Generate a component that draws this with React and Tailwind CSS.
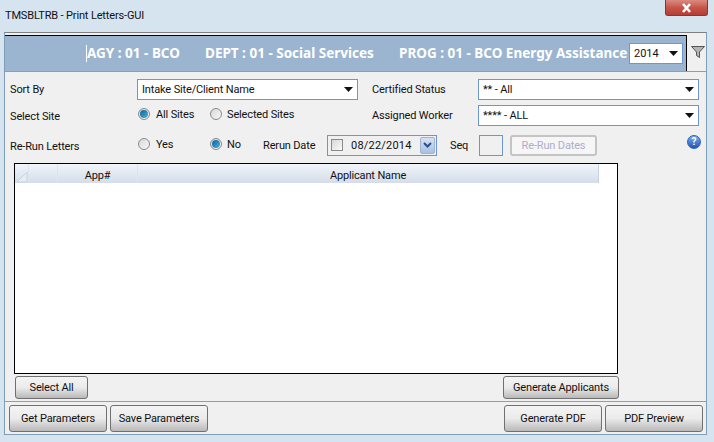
import React from "react";

const font = "font-['Roboto',sans-serif] text-[11px] tracking-[-0.15px] leading-none text-[#111]";

const Select = ({ value, width = "w-[221px]" }) => (
  <div className={`${width} h-[21px] shrink-0 bg-white border border-[#6d96cf] flex items-center justify-between pl-[4px] pr-[4px]`}>
    <span>{value}</span>
    <svg width="9" height="5" viewBox="0 0 9 5">
      <path d="M0 0h9L4.5 5z" fill="#111" />
    </svg>
  </div>
);

const Radio = ({ checked, label, labelClass }) => (
  <div className="flex items-center">
    <span className="w-[12px] h-[12px] rounded-full border border-[#8a8a8a] bg-gradient-to-br from-[#d8d8d8] to-[#f8f8f8] flex items-center justify-center shrink-0">
      {checked && <span className="w-[8px] h-[8px] rounded-full bg-gradient-to-br from-[#0f5f96] to-[#45b4e6]" />}
    </span>
    <span className={labelClass}>{label}</span>
  </div>
);

const Button = ({ children, className = "" }) => (
  <button className={`shrink-0 rounded-[3px] border border-[#707070] bg-gradient-to-b from-[#f4f4f4] via-[#ebebeb] to-[#b9b9b9] flex items-center justify-center ${className}`}>
    {children}
  </button>
);

export default function App() {
  return (
    <div className={`w-[714px] h-[442px] overflow-hidden bg-[#d6e4f0] flex flex-col ${font}`}>
      {/* Title bar */}
      <div className="h-[32px] shrink-0 flex items-start justify-between">
        <div className="pl-[5px] pt-[10px]">TMSBLTRB - Print Letters-GUI</div>
        <div className="w-[43px] h-[16px] mr-[6px] rounded-b-[3px] border border-t-0 border-[#7d3b36] bg-gradient-to-b from-[#d98b80] via-[#c8554a] to-[#b43c33] flex items-center justify-center">
          <svg width="13" height="10" viewBox="0 0 13 10">
            <path d="M3 1l7 8M10 1l-7 8" stroke="#fff" strokeWidth="2.6" />
          </svg>
        </div>
      </div>

      {/* Panel */}
      <div className="ml-[4px] w-[703px] h-[403px] shrink-0 bg-[#f0f0f0] border border-[#7f9db9] border-t-[#808080] flex flex-col">
        {/* Header */}
        <div className="flex items-start h-[38px] shrink-0 pt-[2px]">
          <div className="w-[682px] h-[37px] shrink-0 bg-[#9bb5d1] border-y border-r border-black flex items-center pl-[81px] font-['Noto_Sans',sans-serif] tracking-normal text-white font-bold text-[13.5px]">
            <span className="border-l border-white h-[17px] flex items-center w-[119px] shrink-0">AGY : 01 - BCO</span>
            <span className="w-[194px] shrink-0">DEPT : 01 - Social Services</span>
            <span className="w-[230px] shrink-0">PROG : 01 - BCO Energy Assistance</span>
            <div className="w-[54px] h-[21px] shrink-0 bg-white border border-[#6d96cf] flex items-center justify-between pl-[4px] pr-[4px] font-['Roboto',sans-serif] text-[#111] font-normal text-[11px]">
              <span>2014</span>
              <svg width="9" height="5" viewBox="0 0 9 5">
                <path d="M0 0h9L4.5 5z" fill="#111" />
              </svg>
            </div>
          </div>
          <svg className="ml-[4px] mt-[11px] shrink-0" width="14" height="12" viewBox="0 0 14 12">
            <path d="M.5.5h13L8.5 6v5.5l-3-2V6z" fill="#b4b4b4" stroke="#555" strokeWidth="1" />
          </svg>
        </div>

        {/* Form and grid */}
        <div className="flex-1 min-h-0 border-t border-[#7f9fd0] flex flex-col">
          <div className="flex items-center h-[21px] mt-[7px] pl-[5px]">
            <span className="w-[127px] shrink-0">Sort By</span>
            <Select value="Intake Site/Client Name" />
            <span className="w-[120px] pl-[14px] shrink-0">Certified Status</span>
            <Select value="** - All" />
          </div>

          <div className="flex items-center h-[21px] mt-[5px] pl-[5px]">
            <span className="w-[128px] pt-[1px] shrink-0">Select Site</span>
            <div className="w-[72px] -mt-[4px] shrink-0">
              <Radio checked label="All Sites" labelClass="ml-[6px] pt-[2px]" />
            </div>
            <div className="w-[162px] -mt-[4px] shrink-0">
              <Radio label="Selected Sites" labelClass="ml-[5px] pt-[2px]" />
            </div>
            <span className="w-[106px] shrink-0">Assigned Worker</span>
            <Select value="**** - ALL" />
          </div>

          <div className="flex items-center h-[22px] mt-[8px] pl-[5px]">
            <span className="w-[128px] pt-[3px] shrink-0">Re-Run Letters</span>
            <div className="w-[72px] -mt-[2px] shrink-0">
              <Radio label="Yes" labelClass="ml-[6px]" />
            </div>
            <div className="w-[53px] -mt-[2px] shrink-0">
              <Radio checked label="No" labelClass="ml-[5px]" />
            </div>
            <span className="w-[64px] shrink-0">Rerun Date</span>
            <div className="w-[110px] h-[21px] shrink-0 border border-[#6d96cf] bg-[#f0f0f0] flex items-center pl-[3px] pr-[1px]">
              <span className="w-[12px] h-[12px] border border-[#8a8a8a] bg-gradient-to-br from-[#d8d8d8] to-[#fafafa] shrink-0" />
              <span className="ml-[8px] flex-1 tracking-[0.2px]">08/22/2014</span>
              <span className="w-[15px] h-[17px] rounded-[2px] border border-[#9db4d6] bg-gradient-to-b from-[#d6e2f3] to-[#a9c0e2] flex items-center justify-center">
                <svg width="9" height="6" viewBox="0 0 9 6">
                  <path d="M1 1l3.5 3.5L8 1" fill="none" stroke="#2f4f86" strokeWidth="2" />
                </svg>
              </span>
            </div>
            <span className="ml-[13px] w-[29px] shrink-0">Seq</span>
            <div className="w-[24px] h-[21px] shrink-0 border border-[#6d96cf]" />
            <div className="ml-[7px] w-[87px] h-[21px] shrink-0 rounded-[3px] border-2 border-[#c4c4c4] bg-[#f6f6f6] text-[#adadcb] flex items-center justify-center">
              Re-Run Dates
            </div>
            <span className="ml-[90px] -mt-[7px] w-[14px] h-[14px] rounded-full border border-[#2b62b8] bg-gradient-to-b from-[#7fa8e6] to-[#1c56b8] text-white font-bold text-[10px] flex items-center justify-center shrink-0">
              ?
            </span>
          </div>

          {/* Grid */}
          <div className="ml-[9px] mt-[7px] w-[604px] h-[211px] shrink-0 bg-white border border-black">
            <div className="w-[584px] h-[19px] flex bg-gradient-to-b from-[#f2f5fa] to-[#d4dde9] border-r border-[#c6d3e2]">
              <div className="w-[14px] border-r border-[#dde5ef] flex items-end justify-end">
                <svg width="13" height="13" viewBox="0 0 13 13">
                  <path d="M12 2v10H2z" fill="#e6ecf3" stroke="#c8d3e0" />
                </svg>
              </div>
              <div className="w-[29px] border-r border-[#dde5ef]" />
              <div className="w-[80px] border-r border-[#dde5ef] flex items-center justify-center pt-[3px]">App#</div>
              <div className="flex-1 flex items-center justify-center pt-[3px]">Applicant Name</div>
            </div>
          </div>

          <div className="flex justify-between w-[604px] ml-[10px] mt-[2px]">
            <Button className="w-[73px] h-[23px]">Select All</Button>
            <Button className="w-[116px] h-[23px]">Generate Applicants</Button>
          </div>

          <div className="mt-[2px] border-t border-[#7f9fd0] flex-1 flex items-start pt-[3px] pl-[4px] pr-[4px]">
            <Button className="w-[98px] h-[27px]">Get Parameters</Button>
            <Button className="w-[98px] h-[27px] ml-[3px]">Save Parameters</Button>
            <Button className="w-[98px] h-[27px] ml-[296px]">Generate PDF</Button>
            <Button className="w-[98px] h-[27px] ml-[3px]">PDF Preview</Button>
          </div>
        </div>
      </div>
    </div>
  );
}
